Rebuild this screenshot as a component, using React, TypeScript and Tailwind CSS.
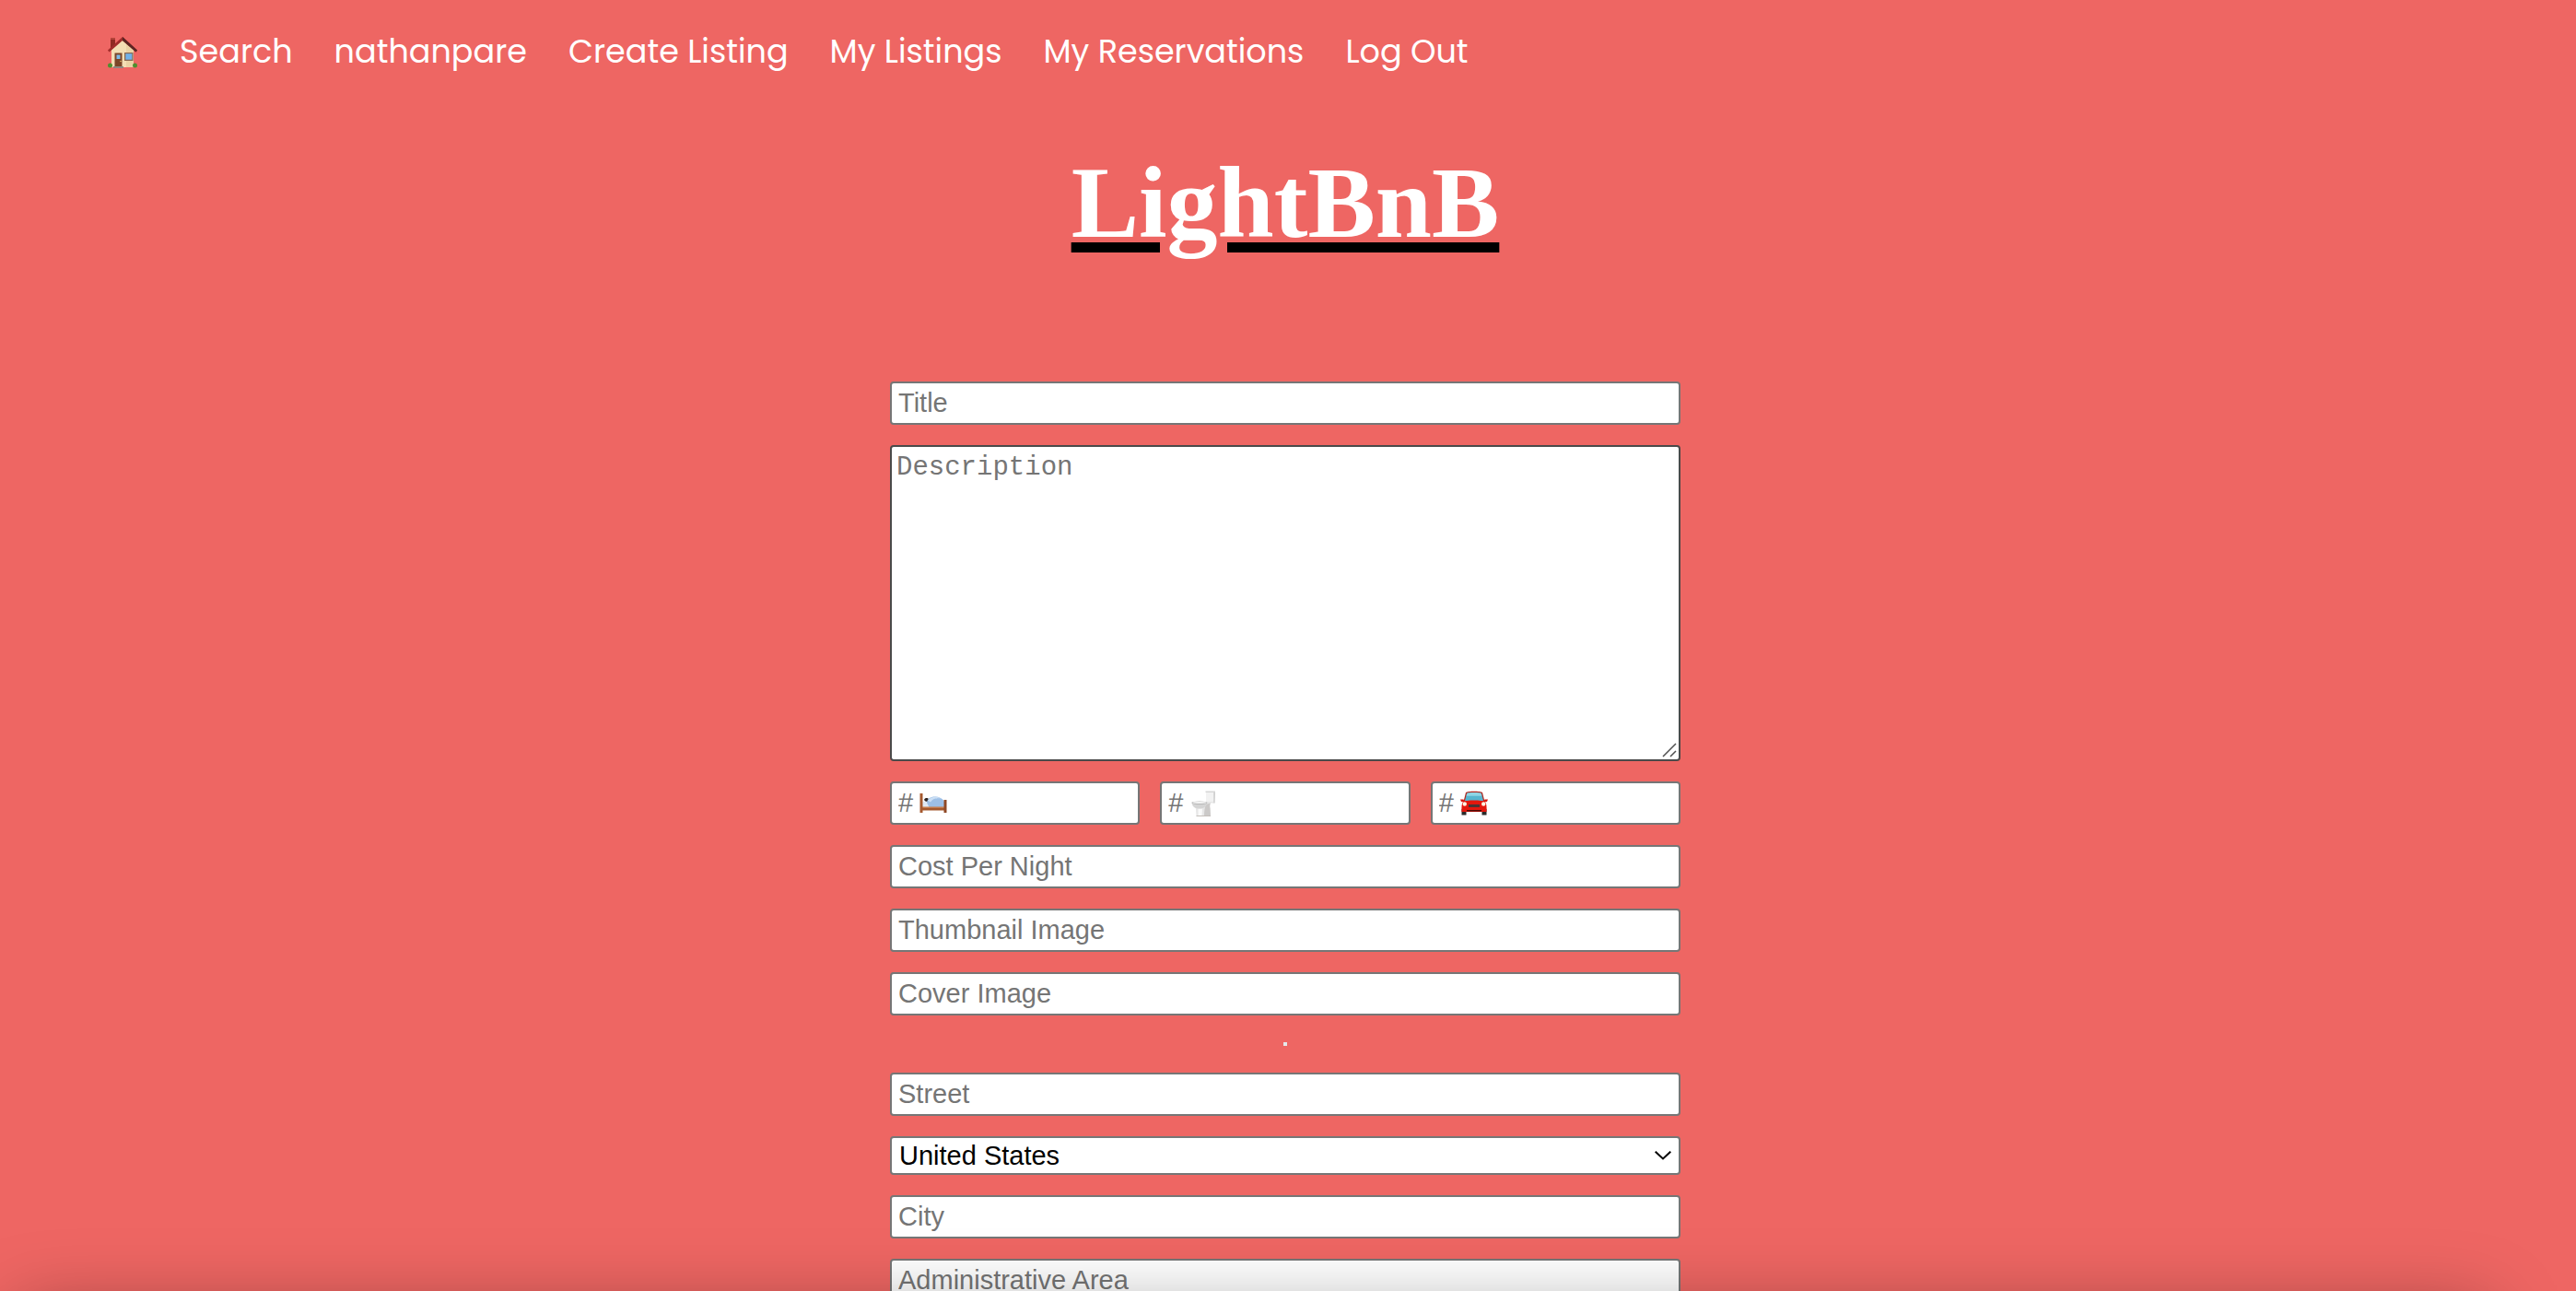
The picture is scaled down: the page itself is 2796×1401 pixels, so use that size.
import React from "react";

const links = ["Search", "nathanpare", "Create Listing", "My Listings", "My Reservations", "Log Out"];

const field =
  "block w-full h-[47px] rounded-[4px] border-2 border-[#767676] bg-white px-[7px] text-[29px] leading-8 text-black placeholder:text-[#757575] placeholder:opacity-100";

function House() {
  return (
    <svg viewBox="0 0 36 36" className="h-9 w-9" aria-hidden="true">
      <path d="M5 2h5v11l-5 3z" fill="#8f2a22" />
      <path d="M5 2h5v2H5z" fill="#b5443a" />
      <path d="M6 15 18 4l12 11v19H6z" fill="#f3deb4" />
      <path d="M22 8l8 7v19h-8z" fill="#ead2a4" />
      <path d="M2 15.500 18 1l16 14.500-1.500 2L18 5 3.500 17.500z" fill="#a12c2a" />
      <path d="M18 1l16 14.500-1.500 2L18 5z" fill="#5c2523" />
      <path d="M9.500 18.500h8V34h-8z" fill="#7b4528" />
      <path d="M11.500 20.500h4v4.500h-4z" fill="#7db9e8" />
      <circle cx="16" cy="27.500" r=".8" fill="#e5c06a" />
      <path d="M20 18h9.500v9H20z" fill="#8a6a52" />
      <path d="M21.300 19.200h7v6.500h-7z" fill="#70b1ea" />
      <path d="M8 33h11v2H8z" fill="#8d8580" />
      <circle cx="4.500" cy="32" r="2.500" fill="#4f8f2f" />
      <circle cx="31.500" cy="32" r="2.500" fill="#4f8f2f" />
    </svg>
  );
}

function Bed() {
  return (
    <svg viewBox="0 0 30 24" className="h-6 w-[30px]" aria-hidden="true">
      <path d="M3 11c1-1.500 5-2 8-.5V16H3z" fill="#dfe9f5" />
      <path d="M5 8c1-2.500 4-2.500 5-.5l.5 2C8.500 10.500 6 10 5 8z" fill="#2c2422" />
      <path d="M8 11c.5-5 5-7 10-6.500 5.500.5 9.500 4 9.500 8V17H11z" fill="#9dbfe6" />
      <path d="M9 8.500c3-4 10-5 14-2-5-1-9 .5-11 4z" fill="#cbdff5" />
      <path d="M3 16h25v3.500H3z" fill="#a4592f" />
      <path d="M3 15.500h25V17H3z" fill="#c77a49" />
      <path d="M.5 1h3v21h-3z" fill="#a65a30" />
      <path d="M26.500 8h3v14h-3z" fill="#8f4926" />
    </svg>
  );
}

function Toilet() {
  return (
    <svg viewBox="0 0 26 28" className="h-7 w-[26px]" aria-hidden="true">
      <path d="M16 1h10l-.5 12.500H21c-1 2-1 3-.5 6l.5 8H5.500l-.5-8C2.500 18 .8 16 .5 13.500V12H16z" fill="#e6e6e6" />
      <path d="M16 1h8v11h-8z" fill="#f2f2f2" />
      <path d="M15.500 .5H26V2H15.500z" fill="#d6d6d6" />
      <path d="M24.300 2H26l-.5 11.500h-1.200z" fill="#cfcfcf" />
      <path d="M16 15l5-1.500c-1 2-1 3-.5 6l.5 8h-7c0-5 .5-9 2-12.500z" fill="#cbc9c8" />
      <path d="M7.500 19.500H12l-.5 7.500H7.500z" fill="#fafafa" />
      <path d="M1 14c2 2 13 2 16 0-.5 3.500-4 5.500-8 5.500S1.500 17.500 1 14z" fill="#d4d4d4" />
      <ellipse cx="9" cy="13.300" rx="8.500" ry="1.900" fill="#b9b9b9" />
      <ellipse cx="9" cy="13" rx="7.500" ry="1.100" fill="#f4f4f4" />
      <path d="M5.500 27h15.500v1H5.500z" fill="#c4bfba" />
    </svg>
  );
}

function Car() {
  return (
    <svg viewBox="0 0 30 28" className="h-7 w-[30px]" aria-hidden="true">
      <path d="M1.500 20h5v6.500h-5zM23.500 20h5v6.500h-5z" fill="#2b2b2b" />
      <path d="M6 2c2-1.800 16-1.800 18 0l2.500 10H3.500z" fill="#b3261d" />
      <path d="M7 3c3-1.300 13-1.300 16 0l2 8H5z" fill="#56b5cf" />
      <path d="M7.500 2.800c3-1 12-1 15 0l.7 3H6.700z" fill="#8fd5e4" />
      <path d="M0 9.500h3.500l1 2.500H1zM30 9.500h-3.500l-1 2.500H29z" fill="#d8160e" />
      <path d="M3 12c3-2 21-2 24 0 1.500 2 1.800 6 1.500 11h-27C1.200 18 1.500 14 3 12z" fill="#e3170d" />
      <circle cx="4.800" cy="14.500" r="2.200" fill="#fff3e0" />
      <circle cx="25.200" cy="14.500" r="2.200" fill="#fff3e0" />
      <path d="M9 15h12v3H9z" fill="#4a3434" />
      <path d="M7 21h16v1.500H7z" fill="#4c0c08" />
    </svg>
  );
}

function CountField({ label, children }: { label: string; children: React.ReactNode }) {
  return (
    <div className="relative">
      <input type="number" aria-label={label} placeholder="#" className={field} />
      <span className="pointer-events-none absolute inset-y-0 left-8 flex w-[30px] items-center justify-center">
        {children}
      </span>
    </div>
  );
}

export default function App() {
  return (
    <div className="relative h-screen overflow-hidden bg-[#ee6663] font-['Liberation_Sans',Arial,sans-serif]">
      <nav className="flex h-[113px] items-center gap-[45px] pl-[115px] font-['Poppins','Inter',sans-serif] text-[35px] text-white">
        <a href="#home" aria-label="Home" className="-mr-px">
          <House />
        </a>
        {links.map((l) => (
          <a key={l} href="#top" className="whitespace-nowrap">
            {l}
          </a>
        ))}
      </nav>

      <div className="flex flex-col items-center pr-[6px]">
        <h1 className="mt-[43px] font-['Liberation_Serif','Times_New_Roman',serif] text-[110px] font-bold leading-[128px] text-white underline decoration-black decoration-[11px] underline-offset-[6px]">
          LightBnB
        </h1>

        <form className="mt-[130px] flex w-full max-w-[858px] flex-col gap-[22px]">
          <input type="text" aria-label="Title" placeholder="Title" className={field} />
          <div className="relative">
            <textarea
              aria-label="Description"
              placeholder="Description"
              className="block h-[343px] w-full resize-y rounded-[4px] border-2 border-[#4a4a4a] bg-white px-[5px] py-[7px] font-['Courier_New','Liberation_Mono',monospace] text-[29px] leading-8 placeholder:text-[#757575] placeholder:opacity-100 [&::-webkit-resizer]:hidden"
            />
            <svg
              viewBox="0 0 16 16"
              className="pointer-events-none absolute bottom-1 right-1 h-4 w-4"
              fill="none"
              stroke="#4f4f4f"
              strokeWidth="1.500"
              aria-hidden="true"
            >
              <path d="M1 15 15 1M9 15l6-6" />
            </svg>
          </div>
          <div className="grid grid-cols-3 gap-[22px]">
            <CountField label="Number of bedrooms">
              <Bed />
            </CountField>
            <CountField label="Number of bathrooms">
              <Toilet />
            </CountField>
            <CountField label="Parking spaces">
              <Car />
            </CountField>
          </div>
          <input type="text" aria-label="Cost Per Night" placeholder="Cost Per Night" className={field} />
          <input type="text" aria-label="Thumbnail Image" placeholder="Thumbnail Image" className={field} />
          <input type="text" aria-label="Cover Image" placeholder="Cover Image" className={field} />
          <div className="flex h-[18px] items-center justify-center">
            <span className="h-1 w-1 bg-[#e4e8ea]" />
          </div>
          <input type="text" aria-label="Street" placeholder="Street" className={field} />
          <div className="relative">
            <select
              aria-label="Country"
              className="block h-[42px] w-full appearance-none rounded-[4px] border-2 border-[#767676] bg-white px-2 text-[29px] leading-8 text-black"
            >
              <option>United States</option>
            </select>
            <svg
              viewBox="0 0 18 10"
              className="pointer-events-none absolute right-[10px] top-4 h-[10px] w-[18px]"
              fill="none"
              stroke="#000"
              strokeWidth="2"
              aria-hidden="true"
            >
              <path d="M.7 .7 9 8.500 17.300 .7" />
            </svg>
          </div>
          <input type="text" aria-label="City" placeholder="City" className={field} />
          <input type="text" aria-label="Administrative Area" placeholder="Administrative Area" className={field} />
        </form>
      </div>

      <div className="pointer-events-none absolute -bottom-[180px] left-5 right-24 h-40 shadow-[0_0_80px_0_rgba(0,0,0,0.36)]" />
    </div>
  );
}
